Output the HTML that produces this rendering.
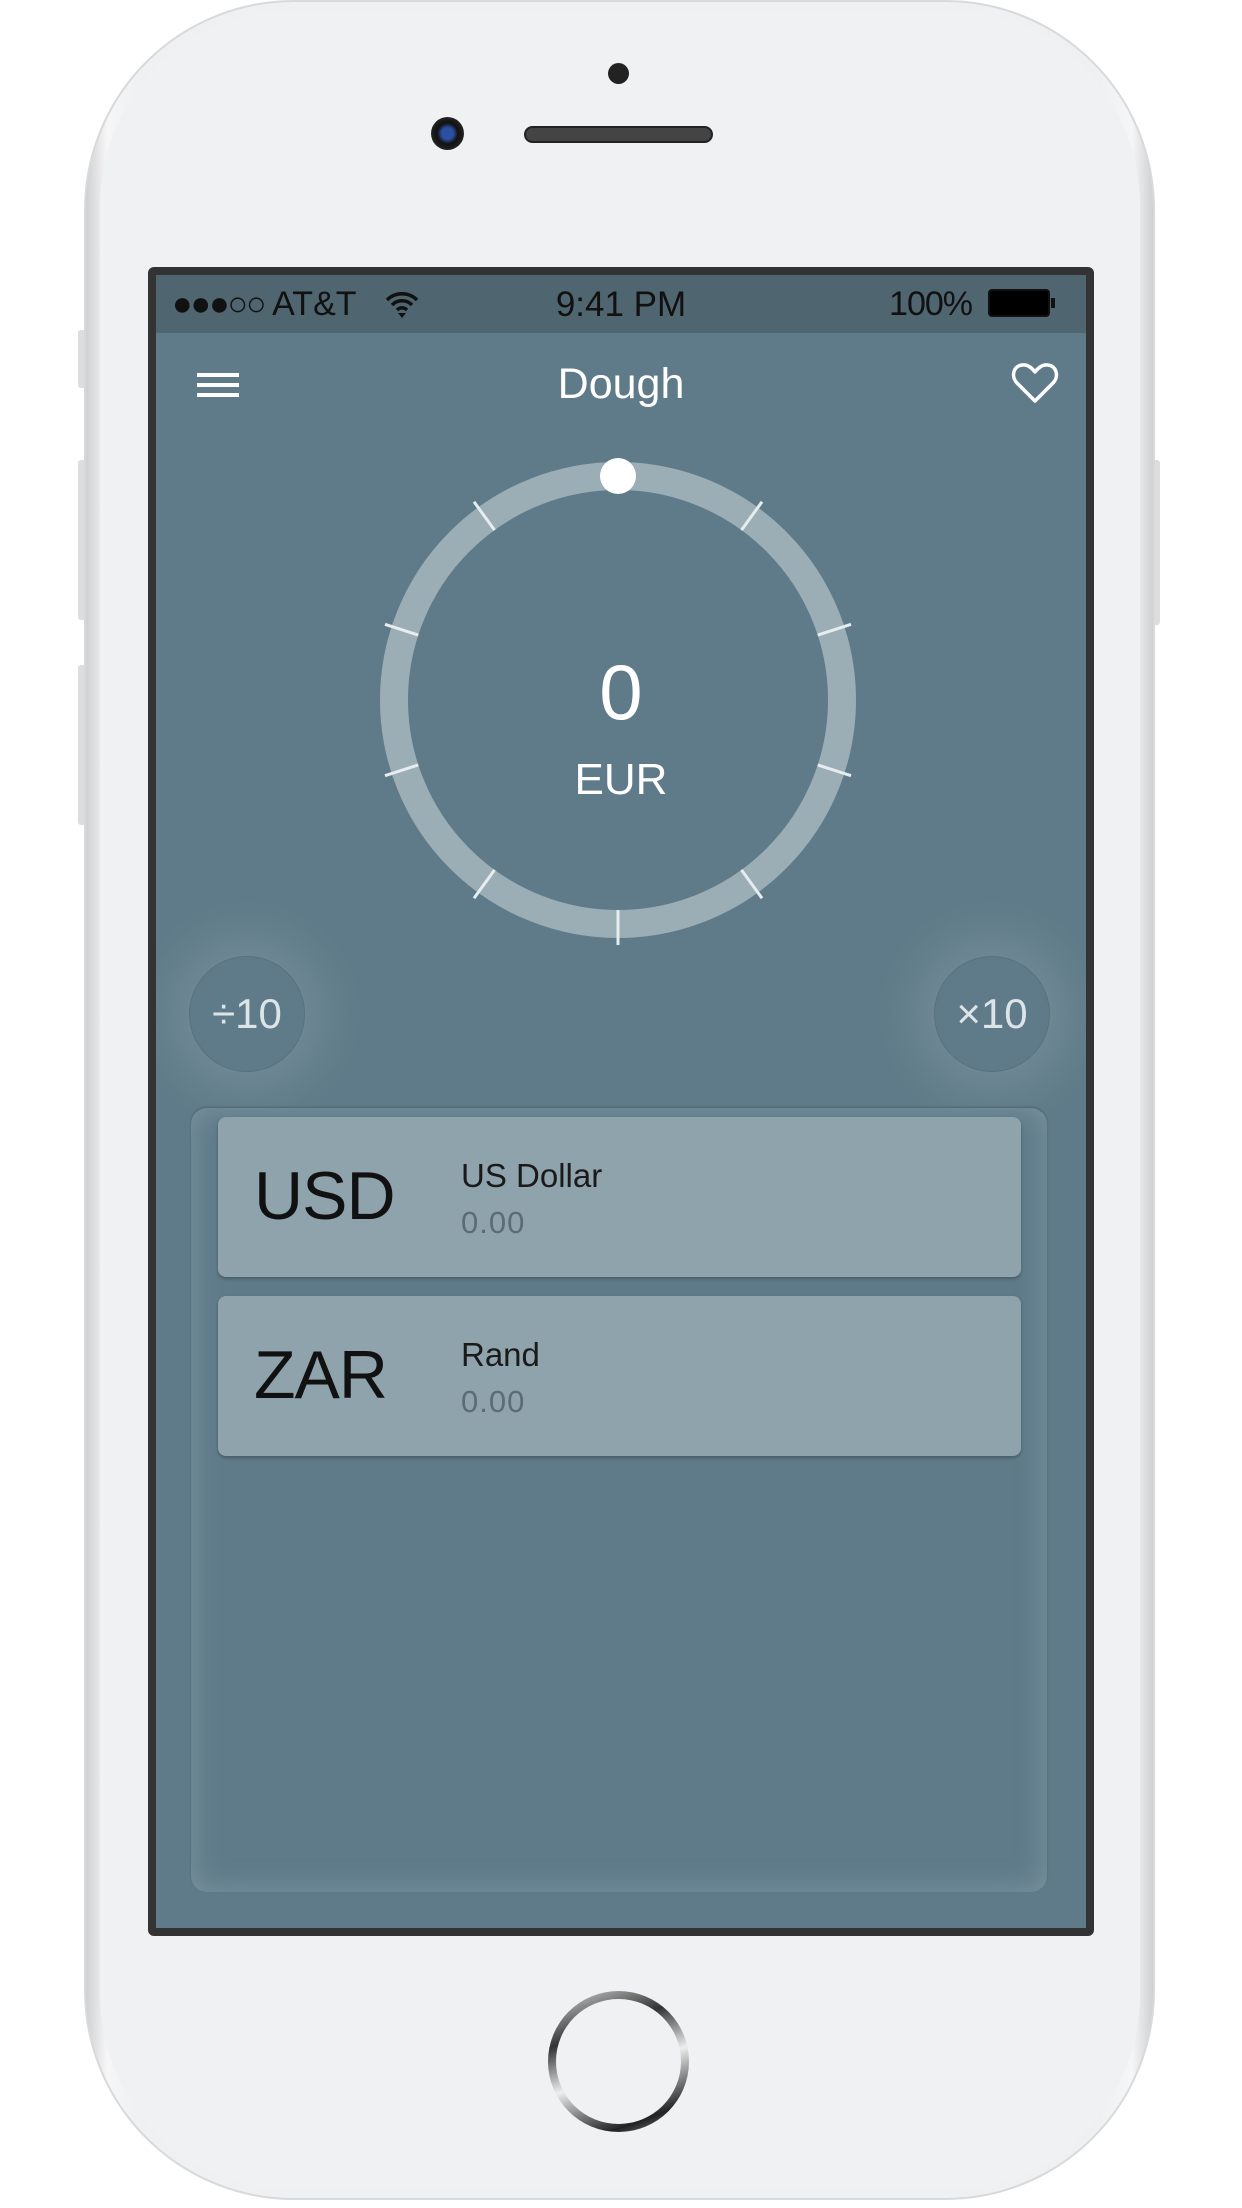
<!DOCTYPE html>
<html><head><meta charset="utf-8"><style>
*{margin:0;padding:0;box-sizing:border-box}
body{width:1242px;height:2208px;background:#fff;position:relative;overflow:hidden;font-family:"Liberation Sans",sans-serif}
.abs{position:absolute}
.body{left:84px;top:0;width:1071px;height:2200px;border-radius:210px;background:linear-gradient(90deg,#cfd0d2,#f6f6f7 2%,#eef0f2 5%,#eef0f2 95%,#f6f6f7 98%,#cfd0d2);border:2px solid #d8d9db}
.face{left:100px;top:10px;width:1040px;height:2180px;border-radius:195px;background:#f0f1f3}
.screen{left:148px;top:267px;width:946px;height:1669px;background:#5f7b89;border:8px solid #333;border-radius:6px;overflow:hidden}
.sb{left:0;top:0;width:930px;height:58px;background:#4f6570;color:#111;font-size:34px}
.t{color:#fff;text-align:center}
.card{left:27px;width:803px;height:160px;background:#8fa3ad;border-radius:8px;box-shadow:0 2px 3px rgba(0,0,0,.25)}
.code{left:36px;font-size:68px;color:#111;top:40px;letter-spacing:-1px}
.nm{left:243px;top:40px;font-size:33px;color:#1a1a1a}
.val{left:243px;top:88px;font-size:31px;color:#5b6c75;letter-spacing:1px}
.btn{width:116px;height:116px;border-radius:50%;border:1.5px solid #50687373;background:#5f7b89;box-shadow:0 0 50px 20px rgba(255,255,255,.12);color:#dde4e8;font-size:42px;text-align:center;line-height:114px}
</style></head><body>
<div class="abs" style="left:78px;top:330px;width:8px;height:58px;background:#ddd;border-radius:3px"></div>
<div class="abs" style="left:78px;top:460px;width:8px;height:160px;background:#ddd;border-radius:3px"></div>
<div class="abs" style="left:78px;top:665px;width:8px;height:160px;background:#ddd;border-radius:3px"></div>
<div class="abs" style="left:1152px;top:460px;width:8px;height:165px;background:#ddd;border-radius:3px"></div>
<div class="abs body"></div>
<div class="abs face"></div>
<div class="abs" style="left:608px;top:63px;width:21px;height:21px;border-radius:50%;background:#222"></div>
<div class="abs" style="left:431px;top:117px;width:33px;height:33px;border-radius:50%;background:radial-gradient(circle,#2c4fa0 0 25%,#111 45%,#222 70%,#999 100%)"></div>
<div class="abs" style="left:524px;top:126px;width:189px;height:17px;border-radius:9px;background:#444;border:2px solid #222"></div>
<div class="abs screen">
 <div class="abs sb">
  <div class="abs" style="left:16px;top:10px;letter-spacing:-2px">●●●○○ <span style="letter-spacing:0">AT&amp;T</span></div>
  <svg class="abs" style="left:228px;top:14px" width="36" height="30" viewBox="0 0 36 30"><path d="M3 11a21 21 0 0 1 30 0M8 16a14 14 0 0 1 20 0M13 21a7 7 0 0 1 10 0" stroke="#111" stroke-width="3.5" fill="none"/><path d="M14 24l4 5 4-5z" fill="#111"/></svg>
  <div class="abs" style="left:0;width:930px;top:10px;text-align:center;font-size:35px">9:41 PM</div>
  <div class="abs" style="left:700px;width:116px;text-align:right;top:10px;letter-spacing:-1px">100%</div>
  <div class="abs" style="left:832px;top:14px;width:62px;height:28px;border:2px solid #111;border-radius:4px;background:#000"></div>
  <div class="abs" style="left:895px;top:23px;width:4px;height:10px;background:#111"></div>
 </div>
 <div class="abs" style="left:41px;top:98px;width:42px;height:4px;background:#fff;box-shadow:0 10px 0 #fff,0 20px 0 #fff"></div>
 <div class="abs t" style="left:0;width:930px;top:85px;font-size:43px">Dough</div>
 <svg class="abs" style="left:855px;top:86px" width="48" height="44" viewBox="0 0 48 44"><path d="M24 40L6 22C0 16 2 5 11 4c6-1 10 3 13 7 3-4 7-8 13-7 9 1 11 12 5 18z" fill="none" stroke="#fff" stroke-width="3.5" stroke-linejoin="round"/></svg>
 <svg class="abs" style="left:212px;top:175px" width="500" height="500" viewBox="-250 -250 500 500">
  <circle r="224" fill="none" stroke="#a6b6bd" stroke-opacity=".85" stroke-width="28"/>
  <g stroke="#e6ecef" stroke-width="3">
   <line x1="0" y1="210" x2="0" y2="245" transform="rotate(0)"/>
   <line x1="0" y1="210" x2="0" y2="245" transform="rotate(36)"/>
   <line x1="0" y1="210" x2="0" y2="245" transform="rotate(72)"/>
   <line x1="0" y1="210" x2="0" y2="245" transform="rotate(108)"/>
   <line x1="0" y1="210" x2="0" y2="245" transform="rotate(144)"/>
   <line x1="0" y1="210" x2="0" y2="245" transform="rotate(216)"/>
   <line x1="0" y1="210" x2="0" y2="245" transform="rotate(252)"/>
   <line x1="0" y1="210" x2="0" y2="245" transform="rotate(288)"/>
   <line x1="0" y1="210" x2="0" y2="245" transform="rotate(324)"/>
  </g>
  <circle cx="0" cy="-224" r="18" fill="#fff"/>
 </svg>
 <div class="abs t" style="left:0;width:930px;top:372px;font-size:78px">0</div>
 <div class="abs t" style="left:0;width:930px;top:480px;font-size:44px">EUR</div>
 <div class="abs btn" style="left:33px;top:681px">÷10</div>
 <div class="abs btn" style="left:778px;top:681px">×10</div>
 <div class="abs" style="left:35px;top:833px;width:856px;height:784px;border-radius:16px;background:#5f7b89;box-shadow:inset 0 0 30px rgba(160,180,190,.45),0 -1px 2px rgba(0,0,0,.2)">
  <div class="abs card" style="top:9px"><div class="abs code">USD</div><div class="abs nm">US Dollar</div><div class="abs val">0.00</div></div>
  <div class="abs card" style="top:188px"><div class="abs code">ZAR</div><div class="abs nm">Rand</div><div class="abs val">0.00</div></div>
 </div>
</div>
<div class="abs" style="left:548px;top:1991px;width:141px;height:141px;border-radius:50%;background:linear-gradient(160deg,#ddd,#333 30%,#eee 55%,#222 85%,#999);"></div>
<div class="abs" style="left:556px;top:1999px;width:125px;height:125px;border-radius:50%;background:#f0f1f3"></div>
</body></html>
